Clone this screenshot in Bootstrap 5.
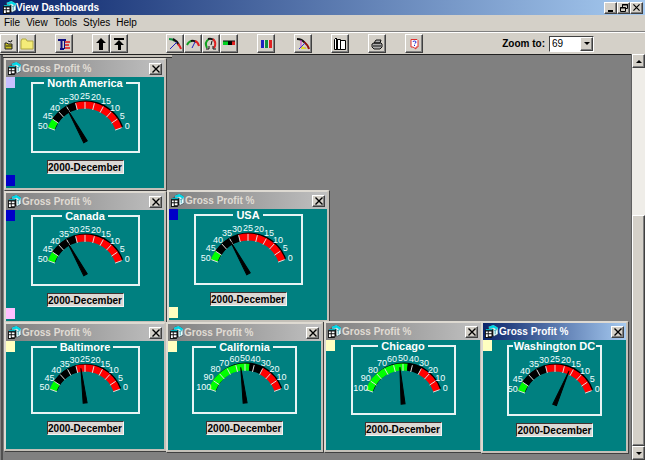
<!DOCTYPE html>
<html lang="en">
<head>
<meta charset="utf-8">
<meta name="viewport" content="width=device-width, initial-scale=1">
<title>View Dashboards</title>
<link href="https://cdn.jsdelivr.net/npm/bootstrap@5.3.0/dist/css/bootstrap.min.css" rel="stylesheet">
<style>
  :root { --face: #d4d0c8; --teal: #008080; }
  body { font: 10px/14px "Liberation Sans", Arial, sans-serif; color: #000; background: var(--face); }
  svg { display: block; overflow: visible; flex: none; }
  button { color: #000; }

  .raised { background: var(--face); border: 1px solid; border-color: #fff #404040 #404040 #fff; box-shadow: inset -1px -1px 0 #808080; padding: 0; display: flex; align-items: center; justify-content: center; flex: none; }
  .app-title { height: 15px; padding: 0 2px 0 3px; background: linear-gradient(90deg, #0a246a, #a6caf0); color: #fff; }
  .caption { font: 700 10px/14px "Liberation Sans", Arial, sans-serif; margin: 0; }
  .sys { width: 13px; height: 12px; }
  .menu-strip { height: 17px; border-bottom: 1px solid #808080; gap: 6px; }
  .menu-strip a { color: #000; text-decoration: none; }
  .tools { height: 22px; border-top: 1px solid #fff; }
  .tool-set { margin-right: 19px; }
  .tool-set.wide { margin-right: 38px; }
  .tool { width: 18px; height: 19px; }
  .zoom { margin-right: 51px; gap: 4px; }
  .zoom label { font-weight: 700; }
  .zoom select { width: 45px; height: 16px; padding: 0 2px; border: 1px solid; border-color: #404040 #fff #fff #404040; border-radius: 0; background: #fff; appearance: none; font-size: 10px; line-height: 12px; color: #000; }
  .drop { width: 13px; height: 14px; top: 1px; right: 1px; pointer-events: none; }

  .desk { background: #808080; border-top: 1px solid #202020; }
  .back-edge { left: 1px; top: 0; width: 171px; height: 100%; border-left: 2px solid #505050; }
  .back-edge::before { content: ""; display: block; height: 3px; background: #c4c0b8; border-bottom: 1px solid #303030; }
  .scroll { width: 14px; background: #efede8; border-left: 1px solid #606060; }
  .scroll .raised { width: 13px; height: 14px; }
  .track { flex: 148 1 0; }
  .scroll .thumb { flex: 230 1 0; }

  .win { position: absolute; width: 162px; height: 132px; background: var(--teal); border: 2px solid; border-color: #dedad2 #c4c0b8 #c4c0b8 #dedad2; box-shadow: 1px 1px 0 #404040; }
  .win-bar { height: 17px; padding: 0 2px; gap: 1px; background: linear-gradient(90deg, #808080, #c0c0c0); color: #e0dcd4; }
  .active .win-bar { background: linear-gradient(90deg, #0a246a, #a6caf0); color: #fff; }
  .north { left: 4px; top: 3px; }
  .canada { left: 4px; top: 136px; }
  .usa { left: 167px; top: 135px; }
  .baltimore { left: 4px; top: 267px; height: 129px; }
  .california { left: 166px; top: 267px; width: 157px; height: 130px; }
  .chicago { left: 324px; top: 266px; width: 158px; height: 131px; }
  .washington { left: 481px; top: 266px; width: 147px; }

  .frame { width: 109px; border: 2px solid #e8f4f4; padding: 0; margin: 0; }
  .frame legend { float: none; width: auto; margin: 0 auto; padding: 0 3px; font: 700 11px/12px "Liberation Sans", Arial, sans-serif; color: #fff; white-space: nowrap; }
  .frame svg { margin: 0 auto; }
  .california .frame, .chicago .frame { width: 105px; }
  .washington .frame { width: 95px; }
  .washington .frame legend { padding: 0 1px; }
  .dial text { font: 9px "Liberation Sans", Arial, sans-serif; fill: #f0ffff; text-anchor: middle; }
  .period { width: 77px; height: 14px; margin-top: 7px; padding: 0; border: 1px solid; border-color: #403030 #f4f4f4 #f4f4f4 #403030; outline: 0; background: #dcd8d4; font: 700 10px/12px "Liberation Sans", Arial, sans-serif; text-align: center; color: #000; }
  .chip { position: absolute; left: 0; width: 9px; height: 11px; }
  .chip-top { top: 17px; }
  .chip-bottom { bottom: 2px; }
  .lilac { background: #c8c0ff; } .blue { background: #0000c8; } .pink { background: #ffc0ff; } .cream { background: #ffffc0; }
</style>
<script src="https://cdn.jsdelivr.net/npm/bootstrap@5.3.0/dist/js/bootstrap.bundle.min.js"></script>
</head>
<body class="d-flex flex-column vh-100 overflow-hidden">

<svg width="0" height="0" class="position-absolute" aria-hidden="true">
  <symbol id="form-icon" viewBox="0 0 14 14">
    <path d="M4 2l5-2 5 3v7l-4 2-6-2z" fill="#e8ffff" stroke="#203040" stroke-width=".6"/>
    <path d="M4 2l5-2 5 3-1 2-4-2-4 1z" fill="#00d8e8"/>
    <path d="M10 6l3-1M11 5v5" stroke="#40a0b0"/>
    <path d="M0 6l2-2h7v7l-2 3H0z" fill="#111"/>
    <path d="M1 7h2v2H1zM4 7h3v2H4zM1 10h2v3H1zM4 10h3v2H4z" fill="#fff"/>
    <path d="M1 5h7" stroke="#00d8e8"/>
  </symbol>
  <symbol id="close-icon" viewBox="0 0 8 8"><path d="M.5.5l7 7M7.5.5l-7 7" stroke="#000" stroke-width="1.4"/></symbol>
</svg>

<header class="app-title d-flex align-items-center flex-shrink-0">
  <svg width="13" height="13" aria-hidden="true"><use href="#form-icon"/></svg>
  <h1 class="caption flex-grow-1">View Dashboards</h1>
  <div class="d-flex">
    <button class="raised sys" aria-label="Minimize"><svg width="8" height="8"><path d="M1 7h5" stroke="#000" stroke-width="2"/></svg></button>
    <button class="raised sys" aria-label="Restore"><svg width="8" height="8" fill="none" stroke="#000"><path d="M2.5 3V.5h5v4H6M2 1h6M.5 3.5h5v4h-5zM0 4h6"/></svg></button>
    <button class="raised sys" aria-label="Close"><svg width="7" height="7"><use href="#close-icon"/></svg></button>
  </div>
</header>

<nav class="menu-strip d-flex align-items-center flex-shrink-0 ps-1" aria-label="Main menu">
  <a href="#">File</a><a href="#">View</a><a href="#">Tools</a><a href="#">Styles</a><a href="#">Help</a>
</nav>

<div class="tools d-flex align-items-center flex-shrink-0" role="toolbar" aria-label="Dashboard tools">
  <div class="tool-set d-flex">
    <button class="raised tool" aria-label="Open"><svg width="14" height="14"><path d="M3 6h2l1 1h4v5H3z" fill="#c8c020" stroke="#222"/><path d="M4 9h6" stroke="#222"/><path d="M6 4l3 1 1-2" fill="none" stroke="#222"/></svg></button>
    <button class="raised tool" aria-label="Folder"><svg width="14" height="14"><path d="M1 4l1-2h4l1 2h6v8H1z" fill="#f4ec78" stroke="#b0a840"/></svg></button>
  </div>
  <div class="tool-set d-flex">
    <button class="raised tool" aria-label="Format"><svg width="14" height="14" fill="none"><path d="M1 3h8M4.500 3v9M3 12h4" stroke="#101080" stroke-width="2"/><path d="M7 5h6M7 8h5M7 11h6" stroke="#e01818" stroke-width="1.500"/><path d="M7.500 4v8" stroke="#101080"/></svg></button>
  </div>
  <div class="tool-set wide d-flex">
    <button class="raised tool" aria-label="Up"><svg width="14" height="14"><path d="M7 1l5 5H9v7H5V6H2z"/></svg></button>
    <button class="raised tool" aria-label="Top"><svg width="14" height="14"><path d="M2 1h10v2H2zM7 3l5 5H9v5H6V8H2z"/></svg></button>
  </div>
  <div class="tool-set d-flex">
    <button class="raised tool" aria-label="Quarter gauge"><svg width="14" height="14" fill="none" stroke-width="2"><path d="M1 2q4 0 6 2" stroke="#109040"/><path d="M5 2q4 2 6 6" stroke="#111"/><path d="M10 7q2 2 3 5" stroke="#e02020"/><path d="M2 12l7-7" stroke="#2020c0" stroke-width="1"/></svg></button>
    <button class="raised tool" aria-label="Half gauge"><svg width="14" height="14" fill="none" stroke-width="2"><path d="M1 8q2-4 5-4" stroke="#10a020"/><path d="M5 4q3-1 5 1" stroke="#111"/><path d="M9 4q3 1 4 5" stroke="#e02020"/><path d="M6 11l3-6" stroke="#2020c0" stroke-width="1"/></svg></button>
    <button class="raised tool" aria-label="Round gauge"><svg width="14" height="14" fill="none" stroke-width="2"><path d="M3 11q-3-6 2-9" stroke="#10a020"/><path d="M4 2q3-1 6 1" stroke="#111"/><path d="M9 2q4 4 1 9" stroke="#e02020"/><path d="M2 12h3V9M12 12H9V9M7 8l1-4" stroke="#111" stroke-width="1"/></svg></button>
    <button class="raised tool" aria-label="Bar gauge"><svg width="14" height="14"><path d="M1 4h5v4H1z" fill="#00d020"/><path d="M6 4h4v4H6z"/><path d="M10 4h3v4h-3z" fill="#e02020"/><path d="M1 4h12" stroke="#111"/></svg></button>
  </div>
  <div class="tool-set d-flex">
    <button class="raised tool" aria-label="Columns"><svg width="14" height="14" stroke-width="3"><path d="M3.500 3v8" stroke="#2020c0"/><path d="M7.500 3v8" stroke="#109040"/><path d="M11.500 3v8" stroke="#e02020"/><path d="M5.500 3v8M9.500 3v8" stroke="#ddd" stroke-width="1"/></svg></button>
  </div>
  <div class="tool-set d-flex">
    <button class="raised tool" aria-label="Edit gauge"><svg width="14" height="14" fill="none"><path d="M1 2q5 0 8 4" stroke="#111" stroke-width="2"/><path d="M8 5q4 3 5 7" stroke="#901010" stroke-width="2"/><path d="M5 3v8h5" stroke="#d040d0"/><path d="M3 12l6-6" stroke="#3030d0"/><path d="M6 9l5 3H5z" fill="#e0e020"/></svg></button>
  </div>
  <div class="tool-set d-flex">
    <button class="raised tool" aria-label="Book"><svg width="14" height="14" fill="#fff" stroke="#000"><path d="M1.500 2.500L3 1l1.500 1.500v10h-3zM4.500 2.500h3v10h-3zM7.500 3.500h5v9h-5z"/><path d="M3.500 2v10"/></svg></button>
  </div>
  <div class="tool-set d-flex">
    <button class="raised tool" aria-label="Print"><svg width="14" height="14" fill="#aaa" stroke="#111"><path d="M4 6l2-3h5l-1 3zM2 7l2-1h7l1 1v3l-2 2H4l-2-2zM3 9h8"/></svg></button>
  </div>
  <div class="tool-set d-flex">
    <button class="raised tool" aria-label="Help"><svg width="14" height="14" fill="none"><path d="M4 2.500h6l1 1V10H9v2L6 10H4V3z" fill="#fff" stroke="#e03030"/><path d="M6 5q0-1 1.500-1T9 5q0 1-1.500 2M7.500 8v1" stroke="#2020d0"/></svg></button>
  </div>
  <div class="zoom ms-auto d-flex align-items-center">
    <label for="zoom">Zoom to:</label>
    <div class="position-relative d-flex">
      <select id="zoom"><option>69</option></select>
      <span class="raised drop position-absolute"><svg width="6" height="3"><path d="M0 0h6L3 3z"/></svg></span>
    </div>
  </div>
</div>

<div class="d-flex flex-grow-1 overflow-hidden">
  <main class="desk position-relative flex-grow-1 overflow-hidden">
    <div class="back-edge position-absolute"></div>

    <section class="win north" data-name="North America" data-top="lilac" data-bottom="blue" data-needle="-29"></section>
    <section class="win canada" data-name="Canada" data-top="blue" data-bottom="pink" data-needle="-29"></section>
    <section class="win usa" data-name="USA" data-top="blue" data-bottom="cream" data-needle="-29"></section>
    <section class="win baltimore" data-name="Baltimore" data-top="cream" data-needle="-7" data-radius="38" data-height="59"></section>
    <section class="win california" data-name="California" data-top="cream" data-needle="-7" data-radius="39" data-height="59" data-max="100"></section>
    <section class="win chicago" data-name="Chicago" data-top="cream" data-needle="-5" data-height="61" data-max="100"></section>
    <section class="win washington active" data-name="Washington DC" data-top="cream" data-needle="23"></section>
  </main>
  <div class="scroll d-flex flex-column flex-shrink-0">
    <button class="raised" aria-label="Scroll up"><svg width="6" height="3"><path d="M0 3h6L3 0z"/></svg></button>
    <div class="track"></div>
    <div class="raised thumb"></div>
    <button class="raised" aria-label="Scroll down"><svg width="6" height="3"><path d="M0 0h6L3 3z"/></svg></button>
  </div>
</div>

<script>
  // Angle in degrees from the vertical, radius in pixels from the pivot.
  const at = (deg, r) => {
    const a = deg * Math.PI / 180;
    return (Math.sin(a) * r).toFixed(1) + ' ' + (-Math.cos(a) * r).toFixed(1);
  };
  const arc = (from, to, r, color, width) =>
    `<path d="M${at(from, r)}A${r} ${r} 0 0 1 ${at(to, r)}" fill="none" stroke="${color}" stroke-width="${width}"/>`;

  function dial(max, radius, needle, height) {
    const mid = radius - 4;
    const greenEnd = max === 100 ? 7 : -56;
    const blackEnd = max === 100 ? 28 : -14;
    let out = `<g transform="translate(1 -1)">${arc(-70, 70, mid, '#000', 7)}</g>`;
    out += arc(-70, greenEnd, mid, '#00ff00', 7) + arc(greenEnd, blackEnd, mid, '#000', 7) + arc(blackEnd, 70, mid, '#ff0000', 7);
    for (let i = 0; i <= 10; i++) {
      const deg = -70 + i * 14;
      const [x, y] = at(deg, radius + 5).split(' ').map(Number);
      out += `<path d="M${at(deg, mid - 4)}L${at(deg, mid + 3)}" stroke="#e0e0e0"/>`;
      out += `<text x="${x}" y="${y + 3}">${max - i * max / 10}</text>`;
    }
    out += `<path d="M-2 1L0 ${4 - radius}L2 1z" fill="#000" stroke="#000" transform="rotate(${needle})"/>`;
    return `<svg class="dial" width="90" height="${height}" viewBox="-45 ${10 - height} 90 ${height}" role="img" aria-label="Gross profit gauge">${out}</svg>`;
  }

  document.querySelectorAll('.win').forEach(win => {
    const d = win.dataset;
    win.innerHTML = `
      <div class="win-bar d-flex align-items-center">
        <svg width="13" height="13" aria-hidden="true"><use href="#form-icon"/></svg>
        <h2 class="caption flex-grow-1">Gross Profit %</h2>
        <button class="raised sys" aria-label="Close ${d.name}"><svg width="8" height="8"><use href="#close-icon"/></svg></button>
      </div>
      <div class="d-flex flex-column align-items-center">
        <fieldset class="frame"><legend>${d.name}</legend>${dial(+(d.max || 50), +(d.radius || 40), d.needle, +(d.height || 62))}</fieldset>
        <input class="period" type="text" value="2000-December" readonly aria-label="${d.name} period">
      </div>
      <span class="chip chip-top ${d.top}"></span>
      ${d.bottom ? `<span class="chip chip-bottom ${d.bottom}"></span>` : ''}`;
  });
</script>
</body>
</html>
